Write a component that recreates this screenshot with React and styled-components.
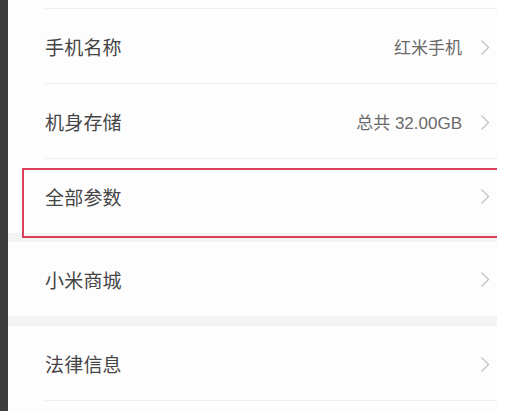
import React from 'react';
import styled, { createGlobalStyle } from 'styled-components';

const GlobalStyle = createGlobalStyle`
  html, body {
    margin: 0;
    padding: 0;
    background: #ffffff;
  }
  body {
    font-family: "Noto Sans CJK SC", "Noto Sans", sans-serif;
  }
`;

const Screen = styled.div`
  display: flex;
  width: 530px;
  height: 411px;
  overflow: hidden;
  background: #ffffff;
`;

const SideBar = styled.div`
  width: 8px;
  flex-shrink: 0;
  background: #3c3c3c;
`;

const Panel = styled.div`
  width: 489px;
  flex-shrink: 0;
  display: flex;
  flex-direction: column;
  background: #fdfdfd;
`;

const Group = styled.div`
  display: flex;
  flex-direction: column;
  background: #fdfdfd;
`;

const GroupGap = styled.div`
  height: ${({ size }) => size}px;
  background: #f3f3f3;
  flex-shrink: 0;
`;

const Stub = styled.div`
  height: 8px;
  margin-left: 37px;
  border-bottom: 1px solid #efefef;
`;

const Row = styled.div`
  position: relative;
  height: ${({ divider }) => (divider ? 75 : 74)}px;
  box-sizing: border-box;
  display: flex;
  align-items: center;
  padding: 0 7px 0 37px;
`;

const Divider = styled.div`
  position: absolute;
  left: 37px;
  right: 0;
  bottom: 0;
  height: 1px;
  background: #efefef;
`;

const Label = styled.span`
  flex: 1;
  font-size: 19px;
  color: #454545;
  letter-spacing: 0.2px;
`;

const Value = styled.span`
  font-family: "Liberation Sans", "Noto Sans CJK SC", sans-serif;
  font-size: 17px;
  color: #6a6a6a;
  margin-right: 18px;
`;

const Chevron = styled.svg`
  width: 10px;
  height: 17px;
  flex-shrink: 0;
  margin-top: 1px;
`;

const Highlight = styled.div`
  position: absolute;
  left: 14px;
  right: 0;
  top: 9px;
  height: 70px;
  box-sizing: border-box;
  border: 2px solid #d8405c;
  border-right: none;
  pointer-events: none;
  z-index: 2;
`;

const Arrow = () => (
  <Chevron viewBox="0 0 10 17">
    <path d="M1.5 1.5 L8.5 8.5 L1.5 15.5" fill="none" stroke="#c4c4c4" strokeWidth="1.4" />
  </Chevron>
);

const SettingRow = ({ label, value, divider, highlight }) => (
  <Row divider={divider}>
    <Label>{label}</Label>
    {value && <Value>{value}</Value>}
    <Arrow />
    {divider && <Divider />}
    {highlight && <Highlight />}
  </Row>
);

const App = () => (
  <>
    <GlobalStyle />
    <Screen>
      <SideBar />
      <Panel>
        <Group>
          <Stub />
          <SettingRow label="手机名称" value="红米手机" divider />
          <SettingRow label="机身存储" value="总共 32.00GB" divider />
          <SettingRow label="全部参数" highlight />
        </Group>
        <GroupGap size={9} />
        <Group>
          <SettingRow label="小米商城" />
        </Group>
        <GroupGap size={10} />
        <Group>
          <SettingRow label="法律信息" divider />
        </Group>
      </Panel>
    </Screen>
  </>
);

export default App;
